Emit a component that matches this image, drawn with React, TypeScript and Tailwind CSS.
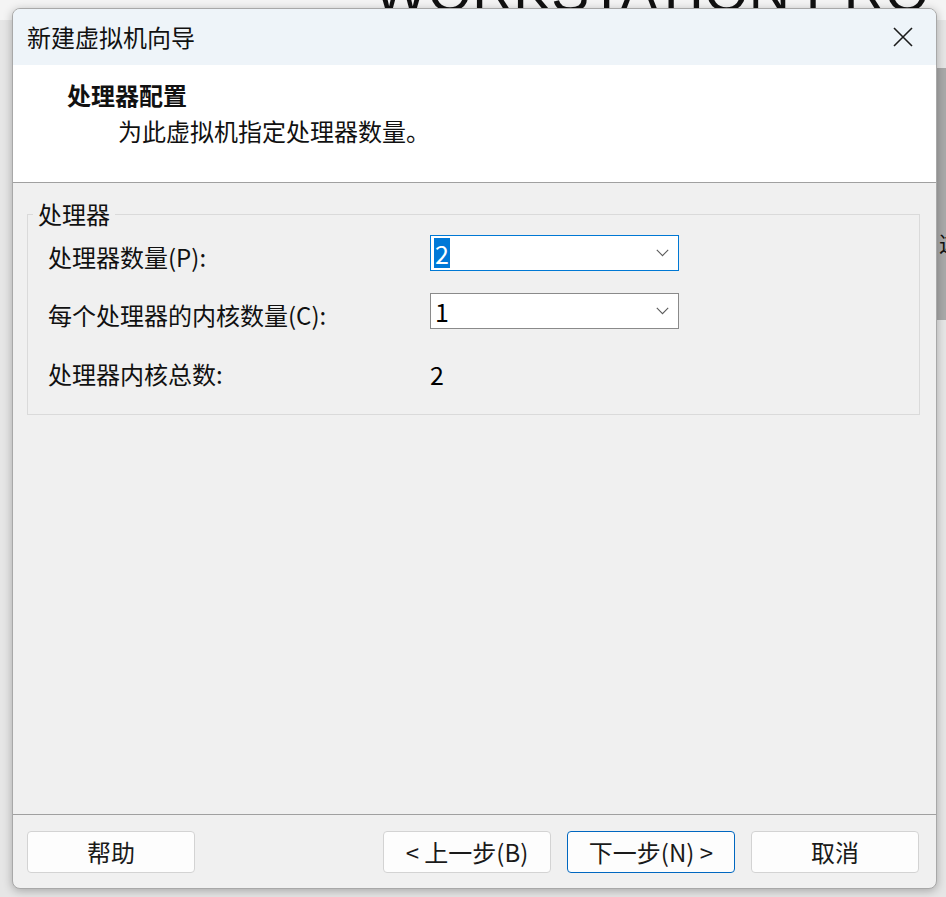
import React from 'react';

const font = "font-['Noto_Sans_CJK_SC','Noto_Sans',sans-serif]";

const Chevron = () => (
  <svg width="13" height="8" viewBox="0 0 13 8" className="shrink-0">
    <path d="M0.8 0.8 L6.5 6.6 L12.2 0.8" fill="none" stroke="#5a5a5a" strokeWidth="1.1" />
  </svg>
);

const Combo = ({ value, focused }: { value: string; focused?: boolean }) => (
  <div
    className={
      focused
        ? 'flex h-[36px] w-[249px] items-center justify-between border border-[#0078d4] bg-white pl-[3px] pr-[9px]'
        : 'flex h-[36px] w-[249px] items-center justify-between border border-[#8a8a8a] bg-white pl-[3px] pr-[9px]'
    }
  >
    {focused ? (
      <span className="inline-block h-[30px] bg-[#0078d7] px-[1px] text-[25px] leading-[30px] text-white">
        {value}
      </span>
    ) : (
      <span className="inline-block h-[30px] px-[1px] text-[25px] leading-[30px] text-black">{value}</span>
    )}
    <Chevron />
  </div>
);

const Btn = ({ label, primary }: { label: string; primary?: boolean }) => (
  <button
    className={
      primary
        ? 'h-[42px] w-[168px] rounded-[4px] border border-[#0067c0] bg-[#fdfdfd] text-[24px] leading-none text-[#1a1a1a]'
        : 'h-[42px] w-[168px] rounded-[4px] border border-[#d3d3d3] bg-[#fdfdfd] text-[24px] leading-none text-[#1a1a1a]'
    }
  >
    {label}
  </button>
);

export default function App() {
  return (
    <div className={`relative h-[897px] w-[946px] overflow-hidden bg-[#e6e6e6] ${font}`}>
      {/* desktop behind the wizard */}
      <div className="absolute left-0 top-0 h-[20px] w-[946px] bg-[#f4f4f4]" />
      <div className="absolute left-[374px] top-[-37px] whitespace-nowrap font-['Liberation_Sans',sans-serif] text-[57px] leading-none text-[#111]">
        WORKSTATION PRO
      </div>
      <div className="absolute left-[937px] top-[68px] h-[252px] w-[9px] bg-[#a9a9a9]" />
      <div className="absolute left-[939px] top-[231px] text-[22px] leading-none text-[#111]">这</div>

      <div className="relative z-10 ml-[12px] mt-[8px] flex h-[881px] w-[925px] flex-col overflow-hidden rounded-[8px] border border-[#a8a8a8] bg-[#f0f0f0] shadow-[0_2px_10px_rgba(0,0,0,0.28)]">
        {/* title bar */}
        <div className="flex h-[56px] shrink-0 items-center justify-between bg-[#eef4f9] pl-[14px] pr-[23px]">
          <span className="text-[24px] leading-none text-[#111]">新建虚拟机向导</span>
          <svg width="20" height="20" viewBox="0 0 20 20">
            <path d="M1 1 L19 19 M19 1 L1 19" stroke="#1c1c1c" strokeWidth="1.6" />
          </svg>
        </div>

        {/* header */}
        <div className="h-[118px] shrink-0 border-b border-[#a0a0a0] bg-white pl-[54px] pt-[13px]">
          <div className="text-[24px] font-bold leading-[34px] text-[#111]">处理器配置</div>
          <div className="mt-[2px] pl-[51px] text-[24px] leading-[34px] text-[#111]">为此虚拟机指定处理器数量。</div>
        </div>

        {/* body */}
        <div className="flex-1 pt-[19px]">
          <fieldset className="ml-[14px] w-[893px] border border-[#dadada] pb-[22px]">
            <legend className="ml-[5px] px-[5px] text-[24px] leading-[24px] text-[#111]">处理器</legend>
            <div className="pl-[20px] pt-[9px]">
              <div className="flex h-[36px] items-center">
                <div className="w-[382px] pt-[8px] text-[24px] leading-[28px] text-[#111]">处理器数量(P):</div>
                <Combo value="2" focused />
              </div>
              <div className="mt-[22px] flex h-[36px] items-center">
                <div className="w-[382px] pt-[8px] text-[24px] leading-[28px] text-[#111]">每个处理器的内核数量(C):</div>
                <Combo value="1" />
              </div>
              <div className="mt-[27px] flex h-[36px] items-center">
                <div className="w-[382px] text-[24px] leading-[28px] text-[#111]">处理器内核总数:</div>
                <div className="text-[25px] leading-[28px] text-black">2</div>
              </div>
            </div>
          </fieldset>
        </div>

        {/* footer */}
        <div className="flex h-[74px] shrink-0 items-start border-t border-[#a0a0a0] pl-[14px] pr-[17px] pt-[16px]">
          <Btn label="帮助" />
          <div className="ml-auto flex gap-[16px]">
            <Btn label="< 上一步(B)" />
            <Btn label="下一步(N) >" primary />
            <Btn label="取消" />
          </div>
        </div>
      </div>
    </div>
  );
}
